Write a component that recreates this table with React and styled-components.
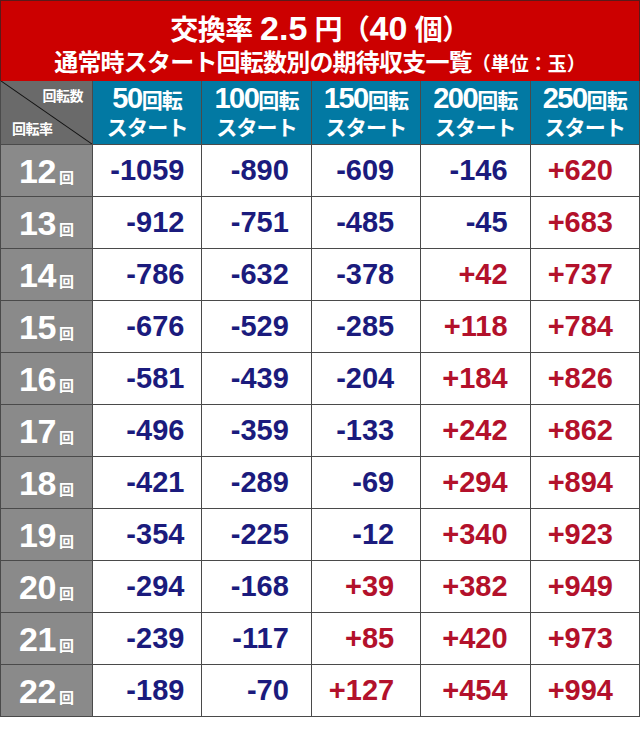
import React from "react";
import styled, { createGlobalStyle } from "styled-components";

const GlobalStyle = createGlobalStyle`
  html, body {
    margin: 0;
    padding: 0;
    background: #ffffff;
  }
  body {
    font-family: "Liberation Sans", "Noto Sans CJK JP", sans-serif;
  }
`;

const JP = `"Liberation Sans", "Noto Sans CJK JP", sans-serif`;

const Page = styled.div`
  width: 640px;
  height: 731px;
  background: #ffffff;
`;

const Banner = styled.div`
  height: 81px;
  box-sizing: border-box;
  padding-top: 6px;
  background: #cc0000;
  border: 1px solid #5a1a1a;
  border-bottom: none;
  color: #ffffff;
  display: flex;
  flex-direction: column;
  align-items: center;
  justify-content: center;
  font-family: ${JP};
  font-weight: 700;
`;

const Title = styled.div`
  font-size: 28px;
  line-height: 36px;
  letter-spacing: -0.5px;
  white-space: nowrap;
`;

const Big = styled.span`
  font-size: 34px;
  letter-spacing: 0;
`;

const Subtitle = styled.div`
  font-size: 24px;
  line-height: 28px;
  letter-spacing: -0.8px;
  white-space: nowrap;
`;

const Unit = styled.span`
  font-size: 19px;
  letter-spacing: 0;
`;

const Grid = styled.div`
  display: grid;
  grid-template-columns: 91px repeat(5, 1fr);
  grid-template-rows: 63px repeat(11, 51px);
  gap: 1px;
  background: #4a4a4a;
  border: 1px solid #4a4a4a;
  border-top: none;
`;

const Corner = styled.div`
  position: relative;
  background: #6a6a6a;
  color: #ffffff;
  font-family: ${JP};
  font-weight: 700;
  font-size: 14px;
  overflow: hidden;
`;

const Diagonal = styled.svg`
  position: absolute;
  inset: 0;
  width: 100%;
  height: 100%;
`;

const CornerTop = styled.span`
  position: absolute;
  top: 4px;
  right: 9px;
  letter-spacing: -0.5px;
`;

const CornerBottom = styled.span`
  position: absolute;
  bottom: 6px;
  left: 11px;
  letter-spacing: -0.5px;
`;

const HeadCell = styled.div`
  background: #0279a3;
  color: #ffffff;
  display: flex;
  flex-direction: column;
  align-items: center;
  justify-content: center;
  font-family: ${JP};
  font-weight: 700;
  line-height: 27px;
`;

const HeadLine = styled.div`
  font-size: 21px;
  letter-spacing: -0.8px;
  white-space: nowrap;
`;

const HeadNum = styled.span`
  font-size: 29px;
  letter-spacing: -1.5px;
`;

const RowLabel = styled.div`
  background: #8a8a8a;
  color: #ffffff;
  display: flex;
  align-items: baseline;
  justify-content: center;
  padding-top: 6px;
  box-sizing: border-box;
  font-family: ${JP};
  font-weight: 700;
`;

const LabelNum = styled.span`
  font-size: 34px;
  line-height: 40px;
  letter-spacing: -0.5px;
`;

const LabelUnit = styled.span`
  font-size: 15px;
  margin-left: 3px;
`;

const Value = styled.div`
  background: #ffffff;
  display: flex;
  align-items: center;
  justify-content: flex-end;
  padding-right: ${(p) => p.$pad}px;
  font-family: "Liberation Sans", sans-serif;
  font-weight: 700;
  font-size: 29px;
  color: ${(p) => (p.$plus ? "#b3112b" : "#1b1b7d")};
`;

const starts = [50, 100, 150, 200, 250];
const pads = [17, 22, 26, 22, 26];

const rows = [
  [12, -1059, -890, -609, -146, 620],
  [13, -912, -751, -485, -45, 683],
  [14, -786, -632, -378, 42, 737],
  [15, -676, -529, -285, 118, 784],
  [16, -581, -439, -204, 184, 826],
  [17, -496, -359, -133, 242, 862],
  [18, -421, -289, -69, 294, 894],
  [19, -354, -225, -12, 340, 923],
  [20, -294, -168, 39, 382, 949],
  [21, -239, -117, 85, 420, 973],
  [22, -189, -70, 127, 454, 994],
];

const App = () => {
  return (
    <Page>
      <GlobalStyle />
      <Banner>
        <Title>
          交換率 <Big>2.5</Big> 円（<Big>40</Big> 個）
        </Title>
        <Subtitle>
          通常時スタート回転数別の期待収支一覧<Unit>（単位：玉）</Unit>
        </Subtitle>
      </Banner>
      <Grid>
        <Corner>
          <Diagonal viewBox="0 0 100 100" preserveAspectRatio="none">
            <line x1="0" y1="0" x2="100" y2="100" stroke="#111" strokeWidth="1" vectorEffect="non-scaling-stroke" />
          </Diagonal>
          <CornerTop>回転数</CornerTop>
          <CornerBottom>回転率</CornerBottom>
        </Corner>
        {starts.map((s) => (
          <HeadCell key={s}>
            <HeadLine>
              <HeadNum>{s}</HeadNum>回転
            </HeadLine>
            <HeadLine>スタート</HeadLine>
          </HeadCell>
        ))}
        {rows.map(([rate, ...vals]) => (
          <React.Fragment key={rate}>
            <RowLabel>
              <LabelNum>{rate}</LabelNum>
              <LabelUnit>回</LabelUnit>
            </RowLabel>
            {vals.map((v, i) => (
              <Value key={i} $plus={v > 0} $pad={pads[i]}>
                {v > 0 ? `+${v}` : v}
              </Value>
            ))}
          </React.Fragment>
        ))}
      </Grid>
    </Page>
  );
};

export default App;
